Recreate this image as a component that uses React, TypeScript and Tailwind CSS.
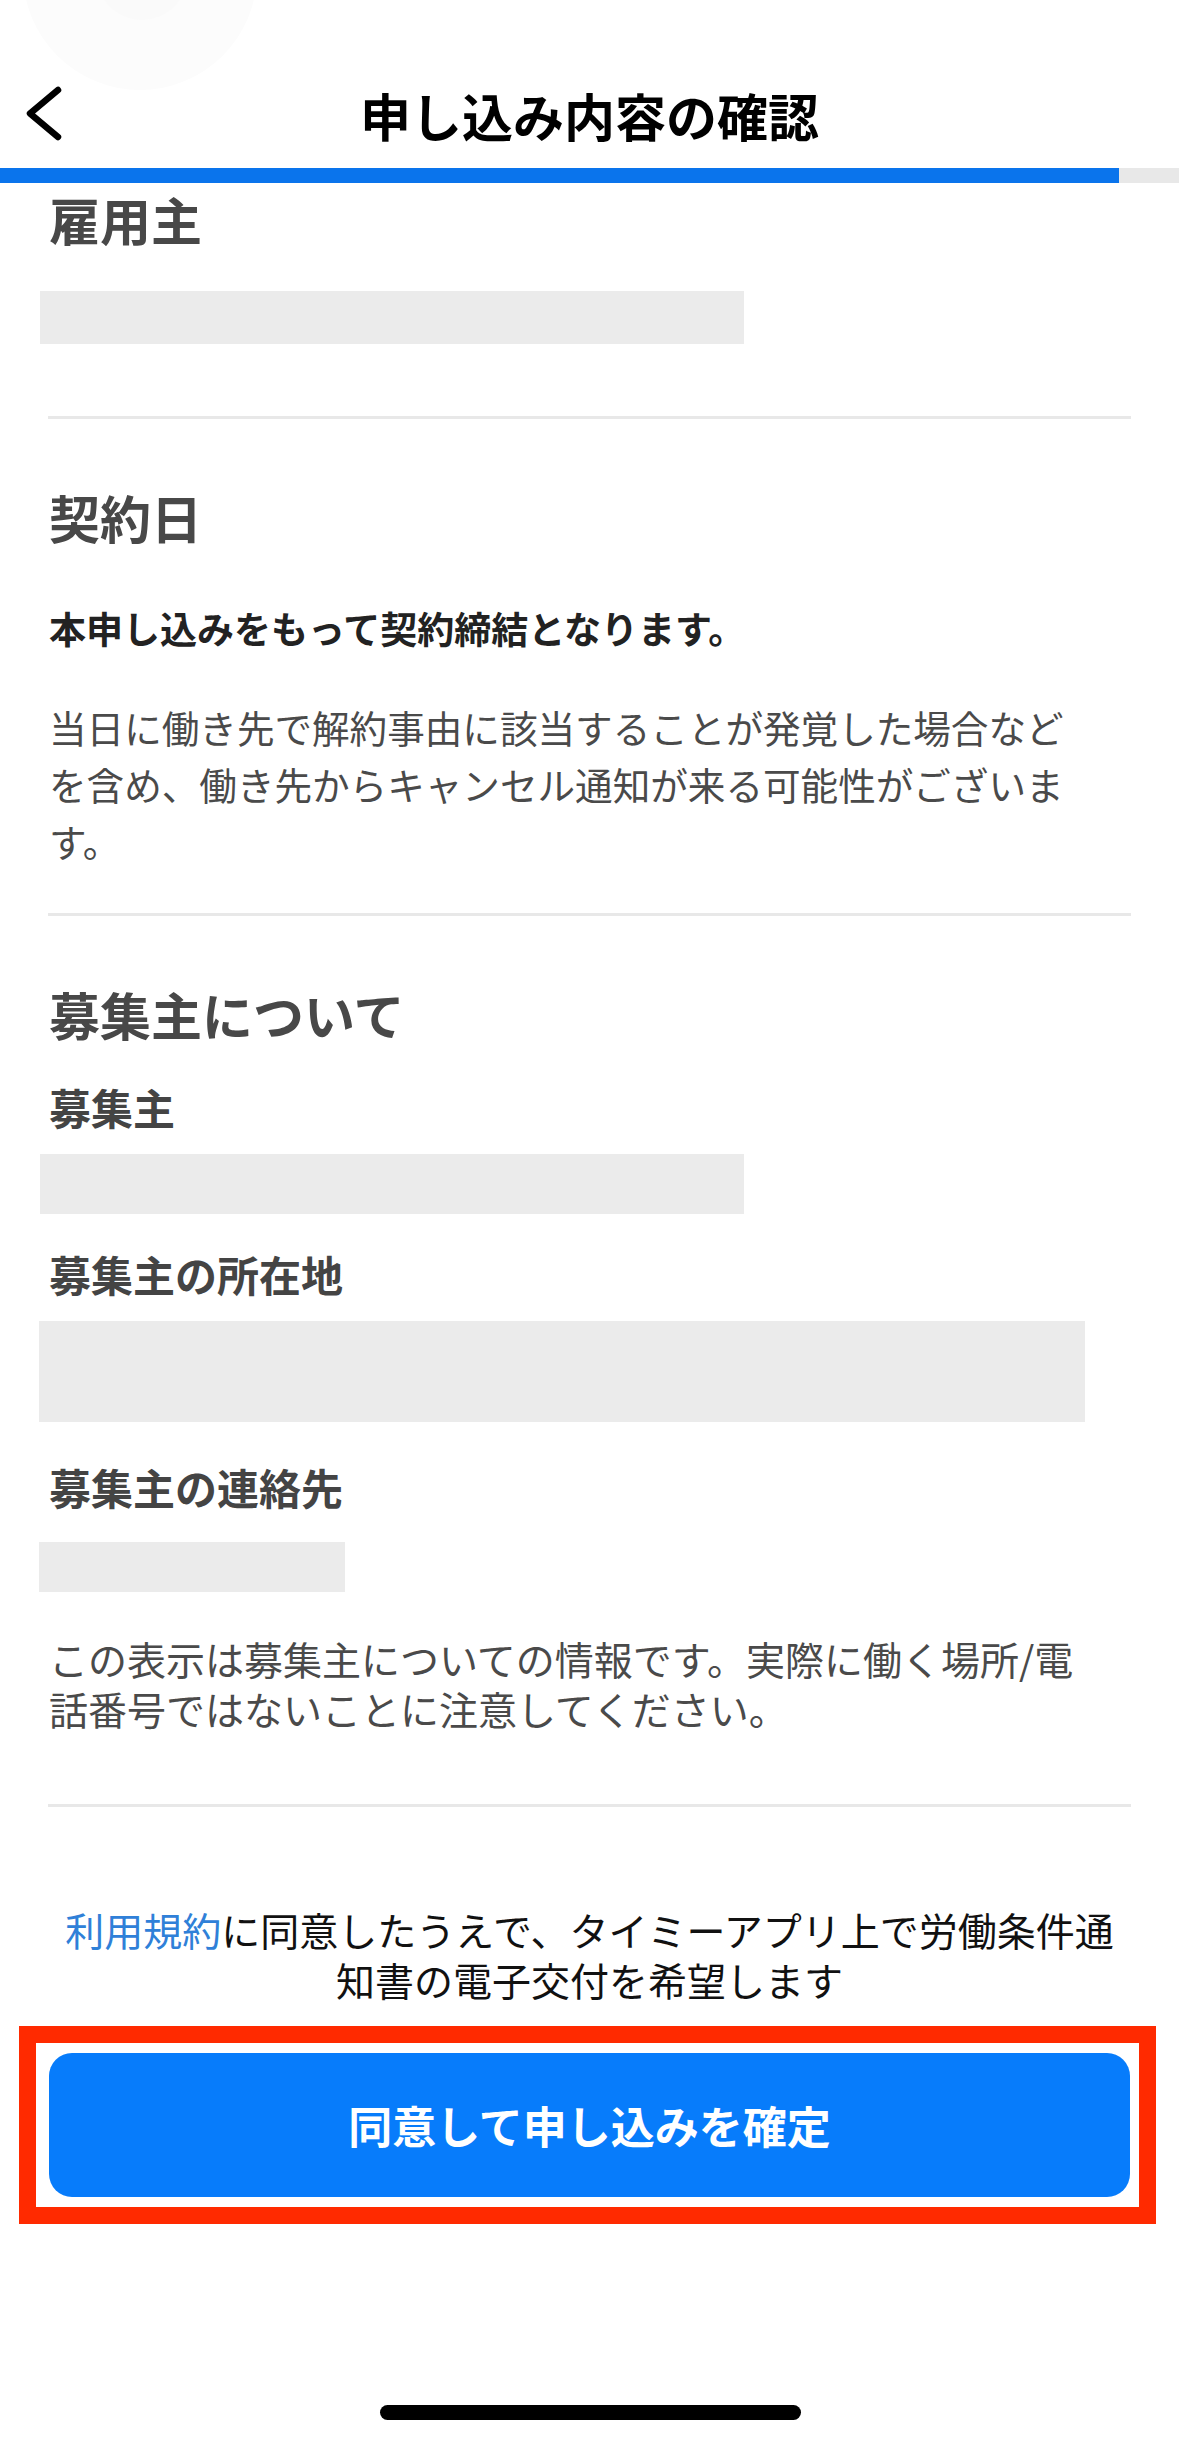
import React from "react";

const Box = ({ cls }: { cls: string }) => <div className={`bg-[#ebebeb] ${cls}`} />;

const Divider = ({ cls }: { cls: string }) => (
  <div className={`ml-[48px] h-[3px] w-[1083px] bg-[#e8e8e8] ${cls}`} />
);

export default function App() {
  return (
    <div className="relative w-[1179px] min-h-[2443px] overflow-hidden bg-white font-['Noto_Sans_CJK_JP','Noto_Sans',sans-serif]">
      {/* faint background shapes at top */}
      <div className="absolute left-[23px] top-[-144px] h-[234px] w-[234px] rounded-full bg-[#fcfcfc]" />
      <div className="absolute left-[97px] top-[-70px] h-[90px] w-[90px] rounded-full bg-[#fafafa]" />

      {/* header */}
      <div className="relative pt-[85px] pb-[26px]">
        <div className="grid h-[57px] grid-cols-[1fr_auto_1fr] items-center">
          <div className="pl-[24px]">
            <svg width="42" height="60" viewBox="0 0 42 60" className="block">
              <path d="M34 5 L6 28.5 L34 52" fill="none" stroke="#000" strokeWidth="6.5" strokeLinecap="round" strokeLinejoin="round" />
            </svg>
          </div>
          <div className="text-[51px] font-bold leading-[57px] text-black">申し込み内容の確認</div>
          <div />
        </div>
      </div>

      {/* progress */}
      <div className="relative flex h-[15px]">
        <div className="h-full w-[1119px] bg-[#0a74ec]" />
        <div className="h-full flex-1 bg-[#e8e8e8]" />
      </div>

      {/* 雇用主 */}
      <div className="mt-[6px] pl-[49px] text-[51px] font-bold leading-[60px] text-[#484848]">雇用主</div>
      <Box cls="ml-[40px] mt-[42px] h-[53px] w-[704px]" />
      <Divider cls="mt-[72px]" />

      {/* 契約日 */}
      <div className="mt-[68px] pl-[49px] text-[51px] font-bold leading-[60px] text-[#484848]">契約日</div>
      <div className="mt-[59px] pl-[49px] text-[37px] font-bold leading-[44px] text-[#222]">
        本申し込みをもって契約締結となります。
      </div>
      <div className="mt-[48px] whitespace-nowrap pl-[49px] text-[37.6px] leading-[57px] text-[#4a4a4a]">
        当日に働き先で解約事由に該当することが発覚した場合など
        <br />
        を含め、働き先からキャンセル通知が来る可能性がございま
        <br />
        す。
      </div>
      <Divider cls="mt-[44px]" />

      {/* 募集主について */}
      <div className="mt-[68px] pl-[49px] text-[51px] font-bold leading-[60px] text-[#484848]">募集主について</div>
      <div className="mt-[38px] pl-[49px] text-[42px] font-bold leading-[50px] text-[#444]">募集主</div>
      <Box cls="ml-[40px] mt-[22px] h-[60px] w-[704px]" />
      <div className="mt-[35px] pl-[49px] text-[42px] font-bold leading-[50px] text-[#444]">募集主の所在地</div>
      <Box cls="ml-[39px] mt-[22px] h-[101px] w-[1046px]" />
      <div className="mt-[40px] pl-[49px] text-[42px] font-bold leading-[50px] text-[#444]">募集主の連絡先</div>
      <Box cls="ml-[39px] mt-[30px] h-[50px] w-[306px]" />
      <div className="mt-[41px] whitespace-nowrap pl-[49px] text-[39px] leading-[50px] text-[#4a4a4a]">
        この表示は募集主についての情報です。実際に働く場所/電
        <br />
        話番号ではないことに注意してください。
      </div>
      <Divider cls="mt-[71px]" />

      {/* terms */}
      <div className="mt-[97px] whitespace-nowrap text-center text-[39px] leading-[50px] text-[#111]">
        <span className="text-[#2f80d8]">利用規約</span>に同意したうえで、タイミーアプリ上で労働条件通
        <br />
        知書の電子交付を希望します
      </div>

      {/* button with red highlight */}
      <div className="ml-[19px] mt-[22px] w-[1137px] border-[17px] border-[#ff2a00] bg-white pb-[10px] pl-[13px] pr-[9px] pt-[10px]">
        <button className="flex h-[144px] w-full items-center justify-center rounded-[23px] bg-[#077cfb] text-[44px] font-bold text-white">
          同意して申し込みを確定
        </button>
      </div>

      {/* home indicator */}
      <div className="mx-auto mt-[181px] h-[15px] w-[421px] translate-x-[1px] rounded-full bg-black" />
    </div>
  );
}
